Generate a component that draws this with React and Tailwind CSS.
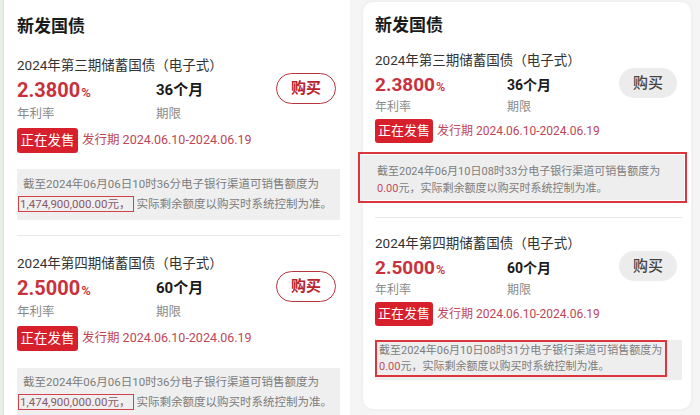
import React from 'react';

const FONT = "font-['Roboto','Noto_Sans_CJK_SC',sans-serif]";

const leftBonds = [
  { title: '2024年第三期储蓄国债（电子式）', rate: '2.3800', term: '36个月' },
  { title: '2024年第四期储蓄国债（电子式）', rate: '2.5000', term: '60个月' },
];

const rightBonds = [
  { title: '2024年第三期储蓄国债（电子式）', rate: '2.3800', term: '36个月', time: '08时33分' },
  { title: '2024年第四期储蓄国债（电子式）', rate: '2.5000', term: '60个月', time: '08时31分' },
];

function Badge({ h, dateSize }) {
  return (
    <div className="flex items-center">
      <span className={`flex items-center justify-center rounded-[3px] bg-[#d81f2c] text-white ${h}`}>
        正在发售
      </span>
      <span className={`ml-[4px] text-[#bd4657] ${dateSize}`}>发行期 2024.06.10-2024.06.19</span>
    </div>
  );
}

function LeftBond({ bond }) {
  return (
    <div>
      <div className="flex h-[22px] items-center text-[13.5px] text-[#333]">{bond.title}</div>
      <div className="flex h-[28px] items-center">
        <div className="w-[139px] font-bold text-[#c8323c]">
          <span className="text-[20px]">{bond.rate}</span>
          <span className="ml-[1px] text-[13px] font-semibold">%</span>
        </div>
        <div className="text-[15px] font-bold text-[#1a1a1a]">{bond.term}</div>
        <button className="-mt-[4px] -mb-[1px] ml-auto mr-[4px] flex h-[31px] w-[60px] items-center justify-center rounded-full border-[1.5px] border-[#b9333b] text-[15px] font-bold text-[#b9232c]">
          购买
        </button>
      </div>
      <div className="flex h-[20px] items-center text-[12.5px] text-[#8a8a8a]">
        <span className="w-[139px]">年利率</span>
        <span>期限</span>
      </div>
      <div className="mt-[4px]">
        <Badge h="h-[25px] w-[61px] text-[13.5px]" dateSize="text-[12.5px]" />
      </div>
    </div>
  );
}

function LeftInfo({ mt, pt }) {
  return (
    <div className={`${mt} ${pt} bg-[#efefef] pb-[6px] pl-[6px] text-[11.5px] leading-[20px] text-[#7d7d7d]`}>
      <div>截至2024年06月06日10时36分电子银行渠道可销售额度为</div>
      <div>
        <span className="-ml-[5px] border-[1.5px] border-[#d0434b] px-[1px] pr-[3px] text-[#8a5a68]">1,474,900,000.00元，</span>
        <span className="ml-[2px]">实际剩余额度以购买时系统控制为准。</span>
      </div>
    </div>
  );
}

function RightBond({ bond }) {
  return (
    <div>
      <div className="flex h-[20px] items-center text-[13.5px] text-[#333]">{bond.title}</div>
      <div className="flex h-[30px] items-center">
        <div className="w-[132px] font-bold text-[#c8323c]">
          <span className="text-[19px]">{bond.rate}</span>
          <span className="ml-[1px] text-[12.5px] font-semibold">%</span>
        </div>
        <div className="text-[14px] font-bold text-[#1a1a1a]">{bond.term}</div>
        <button className="-mt-[4px] ml-auto mr-[5px] flex h-[30px] w-[58px] items-center justify-center rounded-full bg-[#ececec] text-[15px] font-medium text-[#444]">
          购买
        </button>
      </div>
      <div className="flex h-[14px] items-center text-[12px] text-[#8a8a8a]">
        <span className="w-[132px]">年利率</span>
        <span>期限</span>
      </div>
      <div className="mt-[5px]">
        <Badge h="h-[24px] w-[58px] text-[13px]" dateSize="text-[12px]" />
      </div>
    </div>
  );
}

export default function App() {
  return (
    <div className={`flex h-[415px] w-[700px] overflow-hidden bg-white ${FONT}`}>
      {/* left screenshot */}
      <div className="flex w-[350px] border-l-[3px] border-[#e6eee6]">
        <div className="flex-1 border-l border-[#dde6dd] pl-[13px] pr-[10px]">
          <div className="flex h-[54px] items-center text-[17px] font-bold text-[#1a1a1a]">新发国债</div>
          <LeftBond bond={leftBonds[0]} />
          <LeftInfo mt="mt-[16px]" pt="pt-[5px]" />
          <div className="mt-[15px] h-px bg-[#e8e8e8]" />
          <div className="mt-[16px]">
            <LeftBond bond={leftBonds[1]} />
          </div>
          <LeftInfo mt="mt-[17px]" pt="pt-[4px]" />
        </div>
      </div>

      {/* right screenshot */}
      <div className="w-[350px] bg-[#f5f5f5] pl-[13px] pr-[9px] pt-[2px]">
        <div className="h-[407px] rounded-[10px] bg-white pl-[12px] pr-[9px] shadow-[0_0_4px_rgba(0,0,0,0.06)]">
          <div className="flex h-[48px] items-center text-[17px] font-bold text-[#1a1a1a]">新发国债</div>
          <RightBond bond={rightBonds[0]} />
          <div className="-ml-[17px] mt-[9px] w-[329px] border-2 border-[#d9363e] p-[1px]">
            <div className="bg-[#eeeeee] pb-[3px] pl-[16px] pt-[8px] text-[11px] leading-[17px] text-[#7d7d7d]">
              <div>截至2024年06月10日{rightBonds[0].time}电子银行渠道可销售额度为</div>
              <div>
                <span className="text-[#c0505e]">0.00</span>元，实际剩余额度以购买时系统控制为准。
              </div>
            </div>
          </div>
          <div className="mt-[14px] h-px bg-[#e8e8e8]" />
          <div className="mt-[15px]">
            <RightBond bond={rightBonds[1]} />
          </div>
          <div className="mt-[14px] bg-[#eeeeee] pb-[3px]">
            <div className="w-[292px] border-2 border-[#d9363e] pl-[2px] pt-[1px] text-[11px] leading-[16px] text-[#7d7d7d]">
              <div>截至2024年06月10日{rightBonds[1].time}电子银行渠道可销售额度为</div>
              <div>
                <span className="text-[#c0505e]">0.00</span>元，实际剩余额度以购买时系统控制为准。
              </div>
            </div>
          </div>
        </div>
      </div>
    </div>
  );
}
